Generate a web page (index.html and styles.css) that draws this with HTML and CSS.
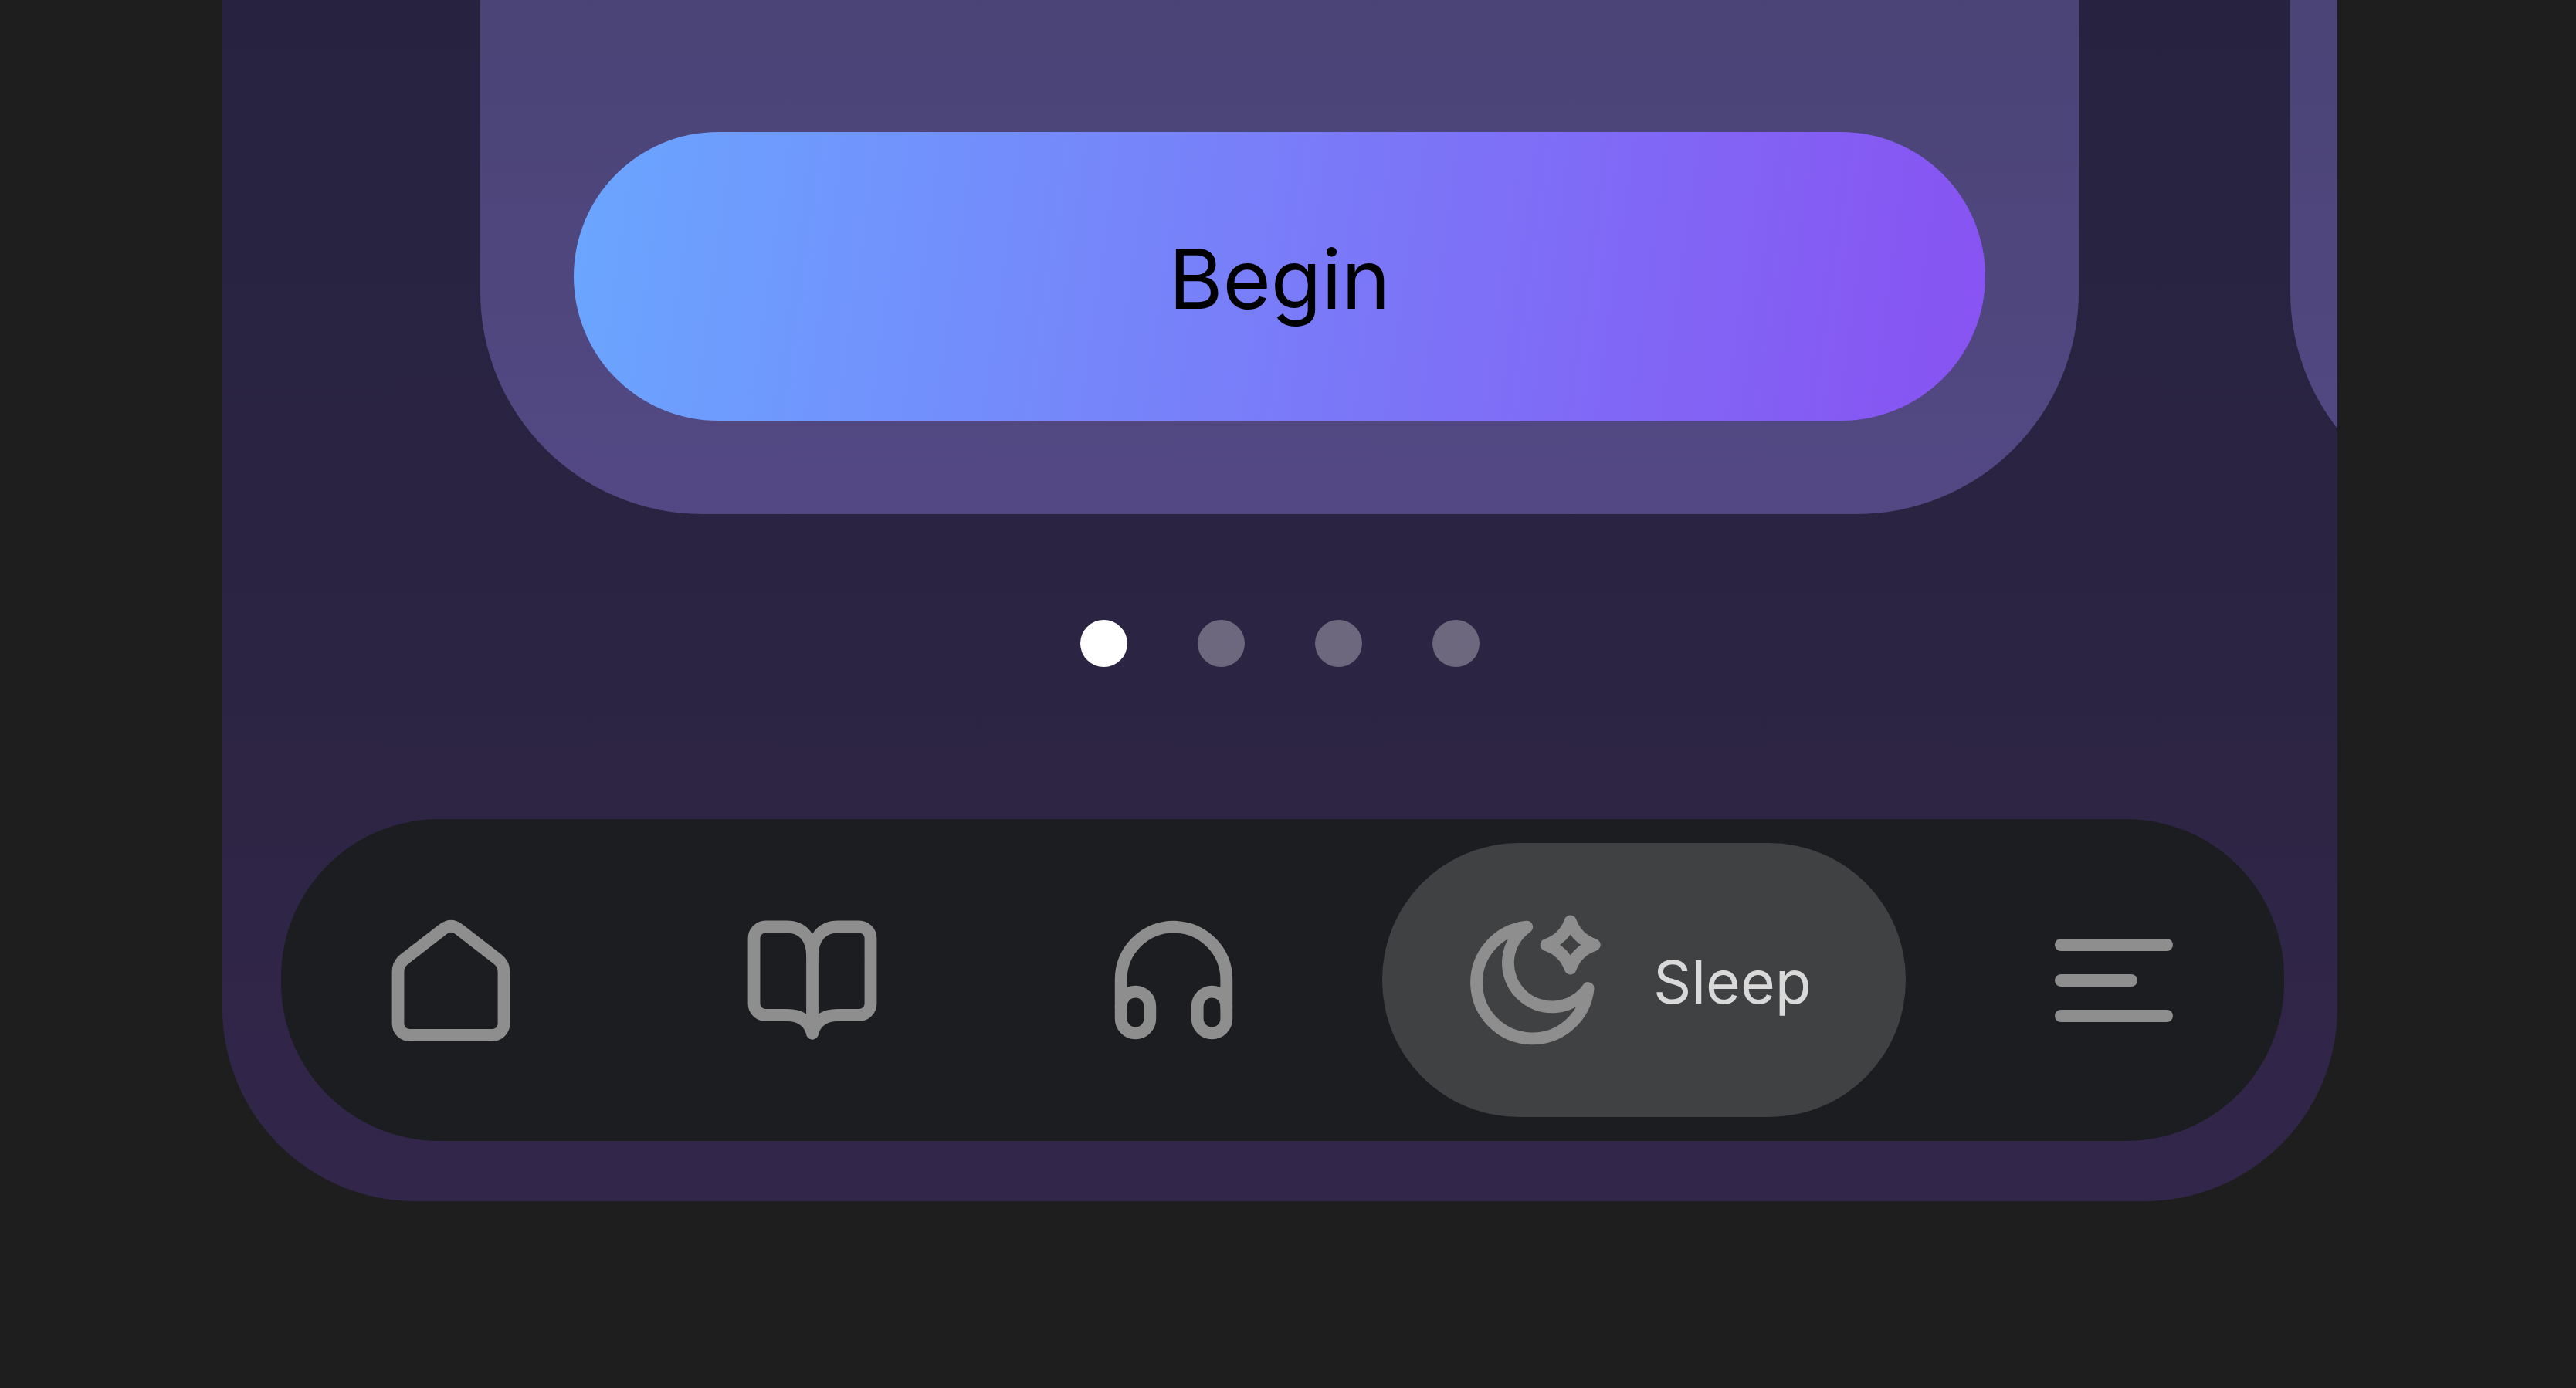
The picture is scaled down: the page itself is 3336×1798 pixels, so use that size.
FILE: index.html
```html
<!DOCTYPE html>
<html>
<head>
    <title>Sleep</title>
    <link rel="stylesheet" href="styles.css">
</head>
<body>
  <div class="phone">
    <div class="cards">
      <div class="card">
        <button class="begin-btn">Begin</button>
      </div>
      <div class="card"></div>
    </div>

    <div class="dots">
      <span class="dot active"></span>
      <span class="dot"></span>
      <span class="dot"></span>
      <span class="dot"></span>
    </div>

    <nav class="nav">
      <svg class="icon nav-wide" width="152" height="158" viewBox="0 0 152 158">
        <path d="M7.5 68 Q7.5 58 15 52 L66 12.5 Q76 5 86 12.5 L137 52 Q144.5 58 144.5 68 V135 A15 15 0 0 1 129.5 150 H22.5 A15 15 0 0 1 7.5 135 Z"/>
      </svg>
      <svg class="icon nav-wide" width="166" height="153" viewBox="0 0 166 153">
        <path d="M83 45 V145.5"/>
        <path d="M83 145.5 C79 130 68 122 50 122 H22.5 A15 15 0 0 1 7.5 107 V22.5 A15 15 0 0 1 22.5 7.5 H50 C70 7.5 83 22 83 45 C83 22 96 7.5 116 7.5 H143.5 A15 15 0 0 1 158.5 22.5 V107 A15 15 0 0 1 143.5 122 H116 C98 122 87 130 83 145.5"/>
      </svg>
      <svg class="icon" width="152" height="153" viewBox="0 0 152 153">
        <path d="M7.7 112 V76 A68.3 68.3 0 0 1 144.3 76 V112"/>
        <rect x="7.7" y="91.7" width="37.6" height="53.6" rx="18.8"/>
        <rect x="106.7" y="91.7" width="37.6" height="53.6" rx="18.8"/>
      </svg>
      <div class="nav-pill">
        <svg class="icon" width="168" height="167" viewBox="0 0 168 167">
          <path d="M73.3 14.7 A72.5 72.5 0 1 0 152.7 94 A57 57 0 1 1 73.3 14.7 Z"/>
          <path d="M129.7 7.5 Q137.7 30 160.8 38 Q137.7 46 129.7 68.5 Q121.7 46 98.6 38 Q121.7 30 129.7 7.5 Z"/>
        </svg>
        <span class="nav-label">Sleep</span>
      </div>
      <div class="menu-icon">
        <span class="bar"></span>
        <span class="bar short"></span>
        <span class="bar"></span>
      </div>
    </nav>
  </div>
</body>
</html>
```

FILE: styles.css
```css
body {
    margin: 0;
    height: 1798px;
    overflow: hidden;
    background: #1e1e1e;
    font-family: Inter, "Liberation Sans", sans-serif;
}

.phone {
    width: 2739px;
    height: 1556px;
    margin-left: 288px;
    overflow: hidden;
    border-radius: 0 0 250px 250px;
    background: linear-gradient(180deg, #262240 0%, #2a2442 45%, #2e2545 67%, #32264a 100%);
}

.cards {
    display: flex;
    gap: 274px;
    height: 666px;
    padding-left: 334px;
}

.card {
    flex: none;
    box-sizing: border-box;
    display: flex;
    align-items: flex-end;
    width: 2070px;
    height: 666px;
    padding: 121px;
    border-radius: 0 0 288px 288px;
    background: linear-gradient(180deg, #4a4476 0%, #534884 100%);
}

.begin-btn {
    width: 100%;
    height: 374px;
    padding: 6px 0 0;
    border: none;
    border-radius: 187px;
    background: linear-gradient(98deg, #6aa6ff 0%, #8852f2 100%);
    color: #000;
    font-family: inherit;
    font-size: 107px;
    font-weight: 420;
}

.dots {
    display: flex;
    justify-content: center;
    gap: 91px;
    margin-top: 137px;
}

.dot {
    width: 61px;
    height: 61px;
    border-radius: 50%;
    background: #6d687e;
}

.dot.active {
    background: #fff;
}

.nav {
    display: flex;
    align-items: center;
    gap: 193px;
    box-sizing: border-box;
    width: 2594px;
    height: 417px;
    margin: 197px 0 0 76px;
    padding-left: 144px;
    border-radius: 205px;
    background: #1c1d20;
}

.icon {
    flex: none;
    overflow: visible;
    fill: none;
    stroke: #8e8e8e;
    stroke-width: 15.8;
    stroke-linecap: round;
    stroke-linejoin: round;
}

.nav-wide {
    margin-right: 116px;
}

.nav-pill {
    display: flex;
    align-items: center;
    box-sizing: border-box;
    width: 678px;
    height: 355px;
    margin-left: 1px;
    padding-left: 114px;
    border-radius: 177px;
    background: #404143;
}

.nav-label {
    margin: 4px 0 0 69px;
    color: #d9d9d9;
    font-size: 77px;
    font-weight: 420;
}

.menu-icon {
    display: flex;
    flex-direction: column;
    gap: 30px;
    width: 153px;
}

.bar {
    height: 16px;
    border-radius: 8px;
    background: #8e8e8e;
}

.bar.short {
    width: 107px;
}
```
